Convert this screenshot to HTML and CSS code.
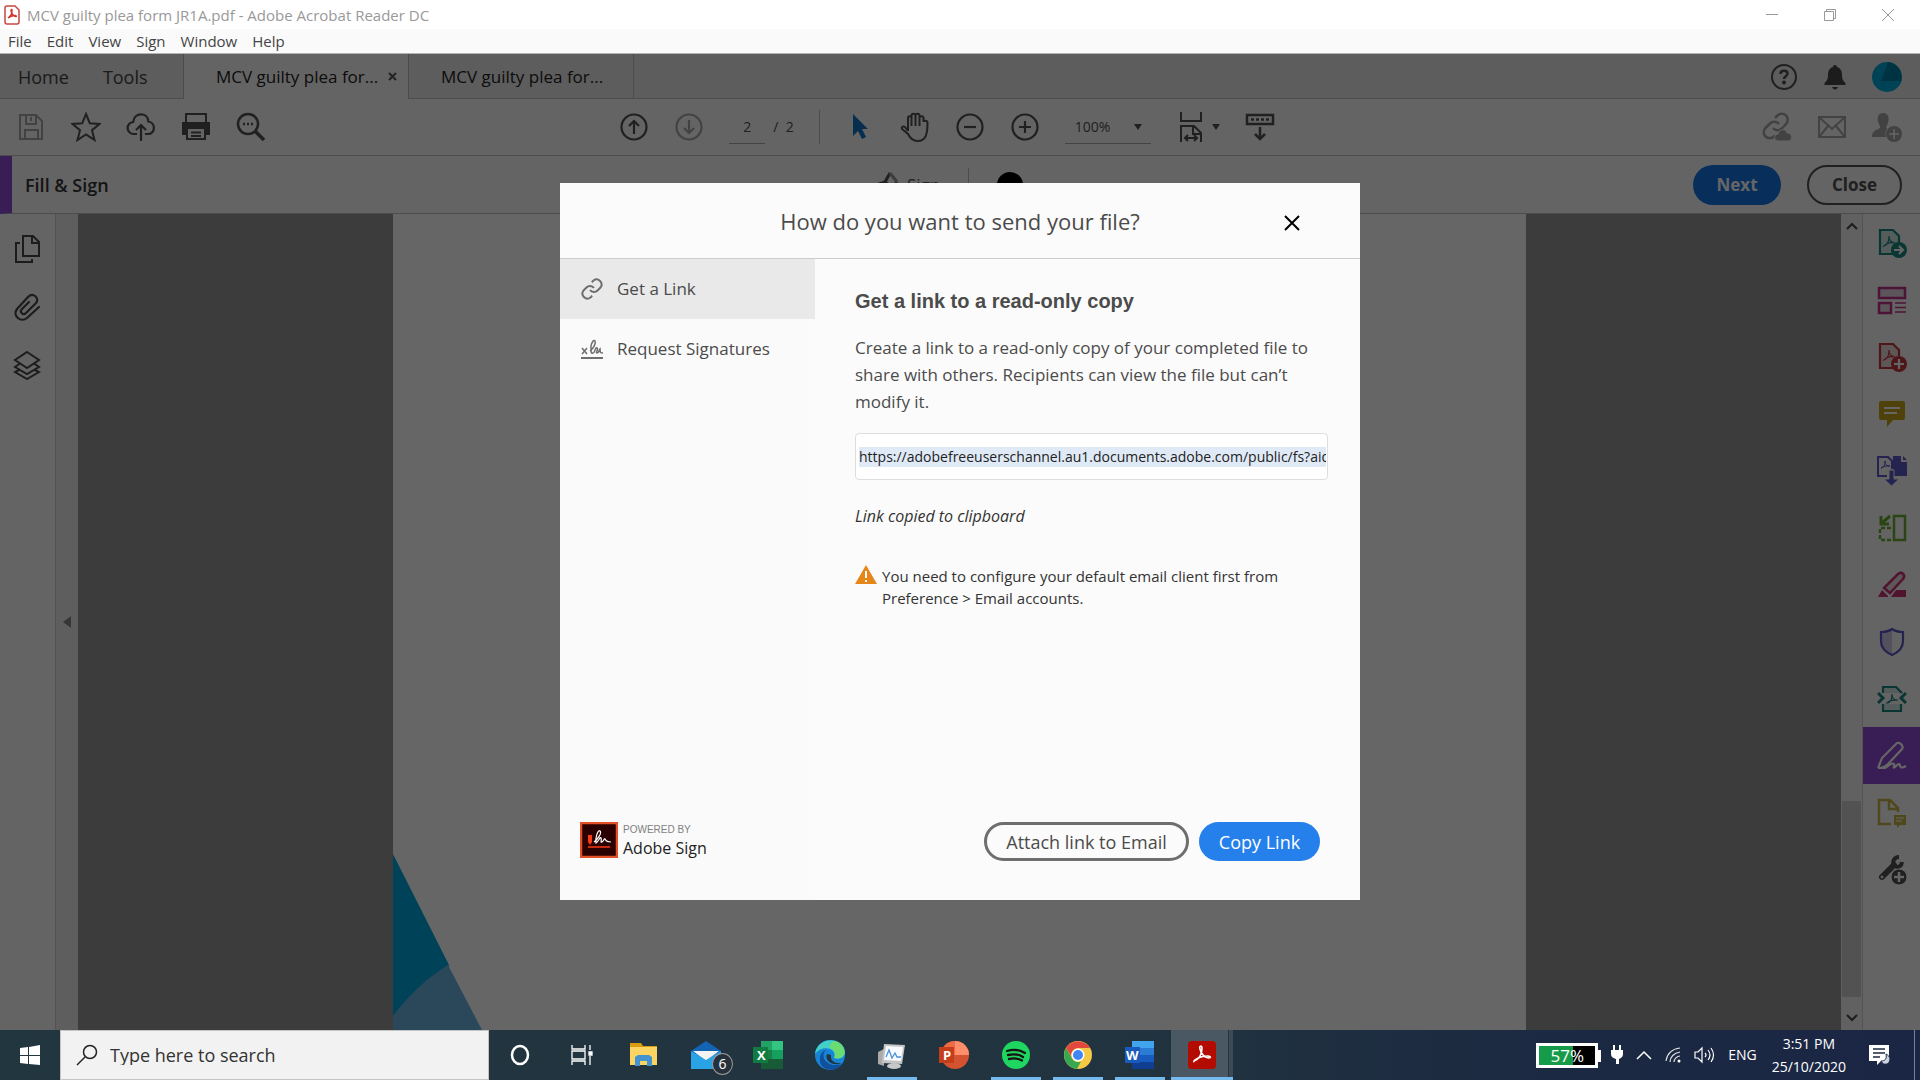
FILE: index.html
```html
<!DOCTYPE html>
<html lang="en">
<head>
    <meta charset="UTF-8">
    <meta name="viewport" content="width=device-width, initial-scale=1.0">
    <title>MCV guilty plea form JR1A.pdf - Adobe Acrobat Reader DC</title>
    <link rel="stylesheet" href="styles.css">
</head>
<body>

    <!-- Title bar -->
    <header class="titlebar">
        <svg class="pdf-icon" width="16" height="20" viewBox="0 0 16 20"><path d="M3 1h8l4 4v12a2 2 0 0 1-2 2H3a2 2 0 0 1-2-2V3a2 2 0 0 1 2-2z" fill="#fff" stroke="#c8463f" stroke-width="1.5"/><path d="M4 13c3-2 4-5 4-7.500 0-2-1.500-1-.8 1 .8 2.500 2.300 4.500 4.300 5 1.300.2 1-1.300-.9-1.100-2.200.1-4.600.9-6.600 2.600z" fill="none" stroke="#d2352c" stroke-width="1.500"/></svg>
        <span class="titlebar-text">MCV guilty plea form JR1A.pdf - Adobe Acrobat Reader DC</span>
        <div class="window-controls">
            <button aria-label="Minimize"><svg width="12" height="12"><path d="M0 5.500h12" stroke="#999"/></svg></button>
            <button aria-label="Restore"><svg width="12" height="12" fill="none" stroke="#999"><path d="M.5 2.500h9v9h-9zM2.500 2.500v-2h9v9h-2"/></svg></button>
            <button aria-label="Close window"><svg width="12" height="12" stroke="#999"><path d="M0 0l12 12M12 0L0 12"/></svg></button>
        </div>
    </header>

    <nav class="menubar">
        <button>File</button>
        <button>Edit</button>
        <button>View</button>
        <button>Sign</button>
        <button>Window</button>
        <button>Help</button>
    </nav>

    <main class="app">
        <!-- Tabs -->
        <div class="tabbar">
            <div class="tab-home">
                <button>Home</button>
                <button>Tools</button>
            </div>
            <div class="tab tab-active">
                <span>MCV guilty plea for...</span>
                <button aria-label="Close tab"><svg width="9" height="9" stroke="#555" stroke-width="2"><path d="M1 1l7 7M8 1L1 8"/></svg></button>
            </div>
            <div class="tab"><span>MCV guilty plea for...</span></div>
            <div class="account">
                <button aria-label="Help"><svg width="28" height="28" fill="none" stroke="#505050" stroke-width="2"><circle cx="14" cy="14" r="12"/><path d="M10.500 11c.2-4.500 7-4 7-.4 0 2.600-3.500 2.600-3.500 5.400" stroke-width="2.500"/><circle cx="14" cy="19.500" r="1" fill="#505050"/></svg></button>
                <button aria-label="Notifications"><svg width="28" height="28" fill="#484848"><path d="M14 2c1.500 0 2 .8 2 2 4 1.200 5 4.500 5 8 0 4 1 6 3.500 8v2h-21v-2C6 18 7 16 7 12c0-3.500 1-6.800 5-8 0-1.200.5-2 2-2zM11 24h6c-.5 1.600-1.500 2.500-3 2.500S11.500 25.600 11 24z"/></svg></button>
                <button aria-label="Account"><svg width="30" height="30"><circle cx="15" cy="15" r="15" fill="#00a9d6"/><path d="M16 0L9 19h20A15 15 0 0 0 16 0z" fill="#007fa3"/></svg></button>
            </div>
        </div>

        <!-- Toolbar -->
        <div class="toolbar">
            <div class="tool-group">
                <button class="disabled" aria-label="Save"><svg width="30" height="30" fill="none" stroke="currentColor" stroke-width="2"><path d="M4 3h16l6 6v18H4zM10 3v9h10V3M15 5v4M9 27v-9h13v9"/></svg></button>
                <button aria-label="Star"><svg width="30" height="30" fill="none" stroke="currentColor" stroke-width="2"><path d="M15 2l3.800 9.300 9.700.6-7.500 6.300 2.500 9.800L15 22.500 6.500 28 9 18.200 1.500 11.900l9.700-.6z"/></svg></button>
                <button aria-label="Upload"><svg width="30" height="30" fill="none" stroke="currentColor" stroke-width="2.200"><path d="M11 22H8a6 6 0 0 1-.8-12C8 0 22 0 22.300 9.500 30 10.500 29.500 22 22 22h-3M15 29V13M10 18l5-5 5 5"/></svg></button>
                <button aria-label="Print"><svg width="30" height="30" fill="none" stroke="currentColor" stroke-width="2"><path d="M5 11V2h20v9" /><path d="M1 10h28v13h-4v-6H5v6H1z" fill="currentColor" stroke="none"/><path d="M6 17v10h18V17M10 20.500h10M10 24h10"/></svg></button>
                <button aria-label="Find"><svg width="30" height="30" fill="none" stroke="currentColor" stroke-width="2.500"><circle cx="12" cy="12" r="10"/><path d="M19 19l9 9" stroke-width="3.500"/><path d="M7 12h2M11 12h2M15 12h2"/></svg></button>
            </div>

            <div class="tool-group tool-center">
                <button aria-label="Previous page"><svg width="30" height="30" fill="none" stroke="currentColor" stroke-width="2.200"><circle cx="15" cy="15" r="12.500"/><path d="M15 22V9M10 14l5-5 5 5"/></svg></button>
                <button class="disabled" aria-label="Next page"><svg width="30" height="30" fill="none" stroke="currentColor" stroke-width="2.200"><circle cx="15" cy="15" r="12.500"/><path d="M15 8v13M10 16l5 5 5-5"/></svg></button>
                <div class="page-nav">
                    <input type="text" value="2" aria-label="Page number">
                    <span>/&nbsp; 2</span>
                </div>
                <i class="divider"></i>
                <button aria-label="Select tool"><svg width="30" height="30"><path d="M8 2v22l5-5 4 8 4-2-4-8h6z" fill="#1473c6"/></svg></button>
                <button aria-label="Hand tool"><svg width="30" height="30" fill="none" stroke="currentColor" stroke-width="2"><path d="M8 19V6c0-2.500 3.500-2.500 3.500 0v8V3.500c0-2.500 4-2.500 4 0V14 3.500c0-2.500 4-2.500 4 0V14 6c0-2.500 4-2.500 4 0v4c0-1.500 4-2 4 1 0 12-2 18-10 18-5 0-7.500-3-9.500-7L2 17c-1-2.500 2-3.500 3.500-1.500L8 19"/></svg></button>
                <button aria-label="Zoom out"><svg width="30" height="30" fill="none" stroke="currentColor" stroke-width="2.200"><circle cx="15" cy="15" r="12.500"/><path d="M9 15h12"/></svg></button>
                <button aria-label="Zoom in"><svg width="30" height="30" fill="none" stroke="currentColor" stroke-width="2.200"><circle cx="15" cy="15" r="12.500"/><path d="M9 15h12M15 9v12"/></svg></button>
                <div class="zoom-select">
                    <select aria-label="Zoom level"><option>100%</option></select>
                    <svg width="8" height="6"><path d="M0 0h8L4 6z" fill="#505050"/></svg>
                </div>
                <button class="fit" aria-label="Fit page">
                    <svg width="30" height="30" fill="none" stroke="currentColor" stroke-width="2"><path d="M5 0v9h20V0M5 30V14h13l7 7v9M17 14v8h8M9 26h12M12 23l-3 3 3 3M18 23l3 3-3 3"/></svg>
                    <svg width="8" height="6"><path d="M0 0h8L4 6z" fill="#505050"/></svg>
                </button>
                <button aria-label="Scrolling"><svg width="30" height="30" fill="none" stroke="currentColor" stroke-width="2.500"><path d="M2 3h26v9H2zM15 15v12M10 22l5 5 5-5"/><path d="M6 7.500h18" stroke-dasharray="3 2"/></svg></button>
            </div>

            <div class="tool-group tool-right disabled">
                <button aria-label="Share link"><svg width="30" height="30" fill="none" stroke="currentColor" stroke-width="2.500"><path d="M11 16a6 6 0 0 0 9 .5l4-4.500a6 6 0 0 0-8.500-8.500l-2.500 2.500M17 12a6 6 0 0 0-9-.5L3.500 16a6 6 0 0 0 8.500 8.500l1-1"/><path d="M16 29a3.500 3.500 0 0 1 0-7c1-5 8-6 9-1 6 0 6 8 1 8z" fill="currentColor" stroke="#fafafa" stroke-width="1"/></svg></button>
                <button aria-label="Email"><svg width="30" height="30" fill="none" stroke="currentColor" stroke-width="2"><path d="M2 5h26v20H2zM2 5l13 12L28 5M2 25l9-11M28 25l-9-11"/></svg></button>
                <button aria-label="Add people"><svg width="30" height="30" fill="currentColor"><path d="M11 1c8 0 6 10 3 14l1 2c-2 3-2 5-1 8H0c0-6 4-7 8-9V14C5 10 4 1 11 1z"/><circle cx="22" cy="22" r="8"/><path d="M17 22h10M22 17v10" stroke="#fafafa" stroke-width="1.500"/></svg></button>
            </div>
        </div>

        <!-- Fill & Sign bar -->
        <div class="fillbar">
            <h1>Fill &amp; Sign</h1>
            <div class="fill-tools">
                <button class="sign-btn"><svg width="24" height="28" fill="none" stroke="#505050" stroke-width="3"><path d="M1 25l4-12 6-2M11 11l5-9M11 11l7 6M18 17l5-6"/><path d="M16 2l7 9" stroke="#999"/></svg>Sign</button>
                <i class="divider"></i>
                <button class="color-dot" aria-label="Color"></button>
            </div>
            <div class="fill-actions">
                <button class="btn-next">Next</button>
                <button class="btn-close">Close</button>
            </div>
        </div>

        <div class="workspace">
            <aside class="left-rail">
                <button aria-label="Page thumbnails"><svg width="28" height="30" fill="none" stroke="#484848" stroke-width="2"><path d="M10 2h10l6 6v14H10zM19 2v7h7"/><path d="M7 9H3v19h16v-3"/></svg></button>
                <button aria-label="Attachments"><svg width="28" height="30" fill="none" stroke="#484848" stroke-width="2.200" stroke-linecap="round"><path d="M26 15L14 26C8 31-1 24 4 17L15 5c5-5 12 1 8 6L13 21c-3 3-7-1-4-4l7-7"/></svg></button>
                <button aria-label="Layers"><svg width="28" height="30" fill="none" stroke="#484848" stroke-width="2"><path d="M14 2l12 8-12 8L2 10zM7 13.500L2 17l12 7 12-7-5-3.500M7 19.500L2 22l12 7 12-7-5-2.500"/></svg></button>
            </aside>
            <div class="rail-strip"><button aria-label="Collapse panel"><svg width="8" height="12"><path d="M8 0v12L0 6z" fill="#888"/></svg></button></div>
            <div class="canvas">
                <div class="sheet">
                    <svg width="90" height="177"><path d="M0 1l56 111-30 60H0z" fill="#00a8de"/><path d="M0 163q24-32 55-51l34 65H0z" fill="#6cb4e4"/></svg>
                </div>
            </div>
            <div class="scrollbar">
                <svg width="12" height="8" fill="none" stroke="#484848" stroke-width="2"><path d="M1 7l5-5 5 5"/></svg>
                <div class="scroll-thumb"></div>
                <svg width="12" height="8" fill="none" stroke="#484848" stroke-width="2"><path d="M1 1l5 5 5-5"/></svg>
            </div>
            <aside class="right-rail">
                <button aria-label="Export PDF"><svg width="30" height="30" fill="none" stroke="#18847e" stroke-width="2.200"><path d="M16 26H3V2h13l6 6v6" fill="#d5e6e5"/><path d="M7 18c4-1 5-5 5-10 0 5 2 6 6 7-5-1-8 0-11 3z" stroke-width="1.200"/><circle cx="22" cy="22" r="8" fill="#18847e" stroke="none"/><path d="M17 22h9M22 18l4 4-4 4" stroke="#fff"/></svg></button>
                <button aria-label="Organize pages"><svg width="30" height="30" fill="#e6d5df" stroke="#c0328a" stroke-width="2.500"><path d="M2 3h26v10H2zM2 18h12v10H2z"/><path d="M18 18h11M18 22.500h11M18 27h11" stroke-width="1.500"/></svg></button>
                <button aria-label="Create PDF"><svg width="30" height="30" fill="none" stroke="#c63842" stroke-width="2.200"><path d="M16 26H3V2h13l6 6v6" fill="#ecd9da"/><path d="M7 18c4-1 5-5 5-10 0 5 2 6 6 7-5-1-8 0-11 3z" stroke-width="1.200"/><circle cx="22" cy="22" r="8" fill="#c63842" stroke="none"/><path d="M17 22h10M22 17v10" stroke="#fff"/></svg></button>
                <button aria-label="Comment"><svg width="30" height="30"><path d="M4 2h22a2 2 0 0 1 2 2v15a2 2 0 0 1-2 2H16l-6 7v-7H4a2 2 0 0 1-2-2V4a2 2 0 0 1 2-2z" fill="#c3a51a"/><path d="M7 9h16M7 14h13" stroke="#fff" stroke-width="2"/></svg></button>
                <button aria-label="Combine files"><svg width="30" height="30" fill="none" stroke="#5c57c8" stroke-width="2"><path d="M10 20H1V1h10l4 4v8"/><path d="M4 12c3 0 4-4 4-7 0 4 2 5 5 5-4 0-6 0-9 2z" stroke-width="1"/><path d="M16 0h8v6h6v14H16z" fill="#5c57c8" stroke="none"/><path d="M26 0l4 4h-4z" fill="#5c57c8" stroke="none"/><path d="M12 14h5v9h5l-7.500 7L7 23h5z" fill="#5c57c8" stroke="#fafafa" stroke-width="1"/></svg></button>
                <button aria-label="Compare files"><svg width="30" height="30" fill="none" stroke="#6dab32" stroke-width="2.500"><path d="M17 3h11v24H17z"/><path d="M14 15H3v12h11" stroke-dasharray="4 2"/><path d="M13 3L5 10M4 3v8h8" stroke-width="3"/></svg></button>
                <button aria-label="Redact"><svg width="30" height="30" fill="none" stroke="#c73475" stroke-width="2.500"><path d="M7 18L21 4c4-3 8 1 5 5L13 23z" fill="#ead6df"/><path d="M1 27l4-7 6 6v1zM14 27l5-7h10v7z" fill="#c73475" stroke="none"/></svg></button>
                <button aria-label="Protect"><svg width="30" height="30" fill="none" stroke="#5b55c5" stroke-width="2.200"><path d="M15 2v26C6 24 4 19 4 14V5c4 0 8-1 11-3z" fill="#cdcbe8" stroke="none"/><path d="M15 2c3 2 7 3 11 3v9c0 7-4 11-11 14C8 25 4 21 4 14V5c4 0 8-1 11-3z"/></svg></button>
                <button aria-label="Compress PDF"><svg width="30" height="30" fill="none" stroke="#18847e" stroke-width="2.200"><path d="M6 9V3h13l6 6M6 20v7h18v-7" fill="#d5e6e5"/><path d="M10 19c3 0 5-3 5-9 0 5 2 6 6 6-5 0-8 0-11 3z" stroke-width="1.200"/><path d="M1 9l5 5-5 5M29 9l-5 5 5 5" stroke-width="3"/></svg></button>
                <button class="active" aria-label="Fill and sign"><svg width="30" height="30" fill="none" stroke="#fff" stroke-width="2.200"><path d="M1 27l4-10L20 2c3-1 7 3 5 6L11 23c-4 4-10 4-10 4h7c5-3 7-6 9-4 1 2-2 5 1 3 2-2 4-4 5-2 0 2 1 4 6 1"/></svg></button>
                <button aria-label="Send for comments"><svg width="30" height="30" fill="none" stroke="#c4b347" stroke-width="2.500"><path d="M14 26H2V2h11l8 8v4M12 2v9h9"/><path d="M17 17h12v10h-6l-3 3v-3h-3z" fill="#c4b347" stroke="none"/><path d="M19 20h8M19 23h6" stroke="#fff" stroke-width="1"/></svg></button>
                <button aria-label="More tools"><svg width="30" height="30" fill="none" stroke="#505050"><path d="M17 10L5 22" stroke-width="6" stroke-linecap="round"/><path d="M22 2c-5 0-7 5-5 8s7 3 8-3" stroke-width="4"/><circle cx="5" cy="22" r="1" fill="#fff" stroke="#fff"/><circle cx="22" cy="22" r="8" fill="#505050" stroke="#fafafa"/><path d="M17 22h10M22 17v10" stroke="#fff" stroke-width="2.500"/></svg></button>
            </aside>
        </div>

        <!-- Send dialog -->
        <div class="overlay">
            <section class="modal" role="dialog" aria-labelledby="modalTitle">
                <header class="modal-header">
                    <h2 id="modalTitle">How do you want to send your file?</h2>
                    <button class="modal-x" aria-label="Close dialog"><svg width="16" height="16" stroke="#000" stroke-width="2"><path d="M1 1l14 14M15 1L1 15"/></svg></button>
                </header>
                <div class="modal-body">
                    <div class="modal-side">
                        <button class="side-item side-active"><svg width="22" height="22" viewBox="1 1 22 22" fill="none" stroke="#6e6e6e" stroke-width="2"><path d="M10 13a5 5 0 0 0 7.500.5l3-3a5 5 0 0 0-7-7l-1.700 1.700M14 11a5 5 0 0 0-7.500-.5l-3 3a5 5 0 0 0 7 7l1.700-1.700"/></svg>Get a Link</button>
                        <button class="side-item"><svg width="22" height="22" fill="none" stroke="#6e6e6e" stroke-width="1.500"><path d="M0 20h22" stroke-width="2"/><path d="M1 10l5 6M6 10l-5 6M9 13c4-3 6-8 5-10s-4 2-4 6c0 5 0 7 2 6 2 0 2-6 4-5s-2 5 0 5 2-3 3-4c0 3 0 4 3 4"/></svg>Request Signatures</button>
                        <div class="powered">
                            <svg width="38" height="36"><path d="M1 1h36v34H1z" fill="#2a0000" stroke="#e34f26" stroke-width="2.500"/><path d="M8 13h4v7l-2 3-2-3z" fill="#fa3a10"/><path d="M14 20c4-3 8-9 6-11s-5 7-4 12c3-2 4-7 5-5s-1 5 1 4 2-4 3-3 0 3 6 3" fill="none" stroke="#fff" stroke-width="1.200"/><path d="M8 25h22" stroke="#fa3a10" stroke-width="1.500"/></svg>
                            <div>
                                <p class="powered-by">POWERED BY</p>
                                <p class="powered-name">Adobe Sign</p>
                            </div>
                        </div>
                    </div>
                    <div class="modal-content">
                        <h3>Get a link to a read-only copy</h3>
                        <p class="desc">Create a link to a read-only copy of your completed file to share with others. Recipients can view the file but can’t modify it.</p>
                        <div class="link-box">
                            <input type="text" aria-label="Link" readonly value="https://adobefreeuserschannel.au1.documents.adobe.com/public/fs?aid=">
                        </div>
                        <p class="copied">Link copied to clipboard</p>
                        <div class="warning">
                            <svg width="22" height="19"><path d="M11 0l11 19H0z" fill="#e68619"/><path d="M11 6v7M11 15v2" stroke="#fff" stroke-width="2"/></svg>
                            <p>You need to configure your default email client first from Preference &gt; Email accounts.</p>
                        </div>
                        <div class="modal-actions">
                            <button class="btn-attach">Attach link to Email</button>
                            <button class="btn-copy">Copy Link</button>
                        </div>
                    </div>
                </div>
            </section>
        </div>
    </main>

    <!-- Taskbar -->
    <footer class="taskbar">
        <button class="start" aria-label="Start"><svg width="20" height="20" fill="#fff"><path d="M0 3l8-1v8H0zM9 2l11-2v10H9zM0 11h8v8l-8-1zM9 11h11v9L9 19z"/></svg></button>
        <label class="search">
            <svg width="22" height="22" fill="none" stroke="#222" stroke-width="1.500"><circle cx="14" cy="8" r="6.500"/><path d="M9 13l-8 8"/></svg>
            <input type="text" placeholder="Type here to search">
        </label>
        <div class="task-items">
            <button aria-label="Cortana"><svg width="20" height="22"><ellipse cx="10" cy="11" rx="8" ry="9" fill="none" stroke="#fff" stroke-width="2.500"/></svg></button>
            <button aria-label="Task view"><svg width="22" height="20" fill="none" stroke="#fff" stroke-width="1.300"><path d="M1 0v4h13V0M1 6h13v8H1zM1 20v-4h13v4M19 0v5M19 11v9"/><path d="M18 7h3v3h-3z" fill="#fff"/></svg></button>
            <button aria-label="File Explorer"><svg width="28" height="26"><path d="M0 1h11l2 3h14v19H0z" fill="#d99b12"/><path d="M0 5h27v18H0z" fill="#fcd462"/><path d="M5 24V15l3-2h11l3 2v9h-5v-5h-7v5z" fill="#4293cf"/></svg></button>
            <button class="mail" aria-label="Mail"><svg width="30" height="28"><path d="M0 10L15 0l15 10v18H0z" fill="#1464b4"/><path d="M2 10h26L15 20z" fill="#f4f4f4"/><path d="M0 10l15 9 15-9v18H0z" fill="#2aa2e6"/></svg><span>6</span></button>
            <button aria-label="Excel"><svg width="30" height="28"><path d="M8 0h22v28H8z" fill="#1a7f45"/><path d="M8 0h11v9H8z" fill="#21a366"/><path d="M19 0h11v9H19z" fill="#33c481"/><path d="M19 9h11v9H19z" fill="#16a05d"/><path d="M8 18h22v10H8z" fill="#185c37"/><path d="M0 6h15v16H0z" fill="#107c41"/><text x="4" y="19">X</text></svg></button>
            <button aria-label="Edge"><svg width="30" height="30"><circle cx="15" cy="15" r="15" fill="#1784d5"/><path d="M0 14C2-4 29-4 30 12c0 6-6 8-11 6 4-8-10-15-19-4z" fill="#43cfc8"/><path d="M18 1c14 1 16 20 1 17 3-7-2-9-5-11z" fill="#6bdc72"/><path d="M11 10c-7 6 1 19 16 14-7 10-24 6-22-6 0-4 3-7 6-8z" fill="#124f9c"/><path d="M12 14c-3 7 7 13 15 9-7 1-12-2-11-8z" fill="#22353f"/></svg></button>
            <button class="open" aria-label="System monitor"><svg width="28" height="28"><path d="M0 11l6-3v17l-6-2z" fill="#aaa"/><path d="M6 3l21 1-3 19-20-1z" fill="#c4c4c4"/><path d="M8 5l17 1-2 14-17-1z" fill="#f7fbff"/><path d="M8 16l3-7 3 8 3-5 2 4h4" fill="none" stroke="#4a91d9" stroke-width="1.300"/><ellipse cx="16" cy="25" rx="7" ry="3" fill="#c8c8c8"/></svg></button>
            <button aria-label="PowerPoint"><svg width="30" height="28"><circle cx="16" cy="14" r="14" fill="#d35230"/><path d="M16 0a14 14 0 0 1 14 14H16z" fill="#ff8f6b"/><path d="M2 14A14 14 0 0 1 16 0v14z" fill="#ed6c47"/><path d="M0 6h15v16H0z" fill="#c43e1c"/><text x="4" y="19">P</text></svg></button>
            <button class="open" aria-label="Spotify"><svg width="28" height="28"><circle cx="14" cy="14" r="14" fill="#1ed760"/><path d="M5 10c6-2 13-1 18 2M6 14c5-1 11-1 15 2M7 18c5-1 9-1 13 1.500" fill="none" stroke="#191414" stroke-width="2.300" stroke-linecap="round"/></svg></button>
            <button class="open" aria-label="Chrome"><svg width="28" height="28"><circle cx="14" cy="14" r="14" fill="#f6c945"/><path d="M2 7a14 14 0 0 1 24 0H14a7 7 0 0 0-6.500 9z" fill="#e2483d"/><path d="M2 7l6 10.500a7 7 0 0 0 9 3L13 28A14 14 0 0 1 2 7z" fill="#36a852"/><circle cx="14" cy="14" r="6.500" fill="#fff"/><circle cx="14" cy="14" r="5" fill="#4285f4"/></svg></button>
            <button class="open" aria-label="Word"><svg width="30" height="28"><path d="M7 0h22v28H7z" fill="#185abd"/><path d="M7 0h22v7H7z" fill="#41a5ee"/><path d="M7 7h22v7H7z" fill="#2b7cd3"/><path d="M7 21h22v7H7z" fill="#103f91"/><path d="M0 6h15v16H0z" fill="#185abd"/><text x="1" y="19">W</text></svg></button>
            <button class="open current" aria-label="Acrobat Reader"><svg width="28" height="28"><rect width="28" height="28" rx="4" fill="#b30b00"/><path d="M6 20c5-2 8-7 8-13 0-3-3-2-2 1 1 5 5 9 9 9 2 0 2-2-1-2-5 0-9 1-13 4-2 2-1 2-1 1z" fill="none" stroke="#fff" stroke-width="1.600"/></svg></button>
        </div>
        <div class="tray">
            <div class="battery">57%</div>
            <svg width="12" height="20" fill="#fff"><path d="M2 0h2v5h4V0h2v5h2v4c0 3-2 4-4 5v5H5v-5c-3-1-5-2-5-5V5h2z"/></svg>
            <button aria-label="Show hidden icons"><svg width="16" height="10" fill="none" stroke="#fff" stroke-width="1.500"><path d="M1 9l7-7 7 7"/></svg></button>
            <svg width="16" height="16" fill="none" stroke="#ddd" stroke-width="1.200"><path d="M1 14C2 7 7 2 15 1M5 15c0-5 4-9 10-10M9 15c0-3 3-6 6-6"/><circle cx="14" cy="14" r="1.500" fill="#fff" stroke="none"/></svg>
            <svg width="21" height="18" fill="none" stroke="#fff" stroke-width="1.200"><path d="M1 6h3l4-4v14l-4-4H1zM11 7q2 2 0 4M14 4q4 5 0 10M17 2q5 7 0 14"/></svg>
            <span>ENG</span>
            <div class="clock"><span>3:51 PM</span><span>25/10/2020</span></div>
            <button aria-label="Notification center"><svg width="22" height="22"><path d="M0 1h20v16h-8l-4 4v-4H0z" fill="#fff"/><path d="M4 5h12M4 9h12M4 13h7" stroke="#1b2842" stroke-width="1.500"/><path d="M17 10c1 5-1 7-5 7 2 5 9 4 9-2 0-2-2-4-4-5z" fill="#ccd3e0" stroke="#1b2842"/></svg></button>
        </div>
    </footer>

</body>
</html>
```
FILE: styles.css
```css
* { margin: 0; padding: 0; box-sizing: border-box; }
body { height: 100vh; display: flex; flex-direction: column; overflow: hidden; background: #fff; font-family: "Open Sans", "Noto Sans", sans-serif; font-size: 14px; line-height: 20px; color: #222; }
button, input, select { font: inherit; color: inherit; background: none; border: none; outline: none; }
button { display: flex; align-items: center; justify-content: center; cursor: pointer; white-space: nowrap; }
svg { display: block; flex: none; }

/* Title bar */
.titlebar {
    display: flex;
    align-items: center;
    height: 29px;
    padding-left: 4px;
    font-size: 15px;
    color: #999;
}

.titlebar-text { margin-left: 7px; flex: 1; }
.window-controls { display: flex; margin-right: 3px; }
.window-controls button { width: 58px; height: 28px; }

.menubar {
    display: flex;
    gap: 15px;
    height: 24px;
    padding-left: 8px;
    background: #fafafa;
    font-size: 15px;
    color: #444;
}

.app {
    flex: 1;
    min-height: 0;
    display: flex;
    flex-direction: column;
    position: relative;
    background: #fafafa;
    border-top: 1px solid #b4b4b4;
}

/* Tabs */
.tabbar {
    display: flex;
    height: 45px;
    background: #e8e8e8;
    font-size: 17px;
    box-shadow: inset 0 -1px #bebebe;
}

.tab-home {
    display: flex;
    gap: 34px;
    width: 184px;
    padding-left: 18px;
    font-size: 18px;
    color: #444;
    border-right: 1px solid #bebebe;
}

.tab {
    display: flex;
    align-items: center;
    gap: 10px;
    width: 225px;
    padding-left: 32px;
    white-space: nowrap;
    border-right: 1px solid #bebebe;
}

.tab-active { background: #fafafa; }

.account {
    display: flex;
    align-items: center;
    gap: 23px;
    margin-left: auto;
    padding-right: 18px;
}

/* Toolbar */
.toolbar {
    display: grid;
    grid-template-columns: 1fr auto 1fr;
    align-items: center;
    height: 57px;
    padding: 0 18px 0 16px;
    color: #505050;
    border-bottom: 1px solid #bebebe;
}

.tool-group { display: flex; align-items: center; gap: 25px; }
.tool-center { margin-right: 24px; }
.tool-right { justify-content: flex-end; }
.disabled { color: #a5a5a5; }
.page-nav { display: flex; align-items: center; gap: 8px; }
.page-nav input { width: 36px; height: 34px; text-align: center; border-bottom: 1px solid #aaa; }
.divider { width: 1px; height: 34px; background: #bebebe; }
.zoom-select { display: flex; align-items: center; width: 86px; height: 34px; border-bottom: 1px solid #aaa; }
.zoom-select select { width: 69px; padding-left: 10px; appearance: none; }
.fit { gap: 6px; }

/* Fill & Sign */
.fillbar {
    display: flex;
    align-items: center;
    height: 58px;
    padding: 0 18px 0 13px;
    border-left: 12px solid #8f4bd8;
    border-bottom: 1px solid #bebebe;
}

.fillbar h1 { width: 849px; font-size: 18px; font-weight: 600; color: #333; }
.fill-tools { display: flex; align-items: center; gap: 28px; }
.sign-btn { gap: 9px; font-size: 17px; color: #505050; }
.color-dot { width: 26px; height: 26px; border-radius: 50%; background: #000; }
.fill-actions { display: flex; gap: 26px; margin-left: auto; font-size: 17px; font-weight: 700; }
.fill-actions button { height: 40px; border-radius: 20px; }
.btn-next { width: 88px; background: #1473e6; color: #fff; }
.btn-close { width: 95px; color: #505050; border: 2px solid #505050; }

/* Workspace */
.workspace { flex: 1; min-height: 0; display: flex; }

.left-rail {
    width: 56px;
    display: flex;
    flex-direction: column;
    align-items: center;
    gap: 28px;
    padding: 20px 2px 0 0;
    border-right: 1px solid #cfcfcf;
}

.rail-strip { display: flex; align-items: center; justify-content: center; width: 22px; background: #ececec; }
.canvas { flex: 1; display: flex; justify-content: center; background: #979797; }
.sheet { width: 65%; max-width: 1133px; display: flex; align-items: flex-end; background: #fff; }

.scrollbar {
    width: 22px;
    display: flex;
    flex-direction: column;
    align-items: center;
    padding: 8px 0;
    background: #f2f2f2;
    border-right: 1px solid #cfcfcf;
}

.scroll-thumb { width: 19px; height: 196px; margin: auto 0 17px; background: #cdcdcd; }

.right-rail { width: 57px; }
.right-rail button { width: 57px; height: 57px; }
.right-rail .active { background: #8f4bd8; }

/* Send dialog */
.overlay {
    position: absolute;
    inset: 0;
    display: flex;
    align-items: center;
    justify-content: center;
    padding-bottom: 1px;
    background: rgba(0, 0, 0, 0.6);
}

.modal {
    width: 800px;
    max-width: 100%;
    display: flex;
    flex-direction: column;
    background: #fbfbfb;
    color: #4b4b4b;
    font-size: 17px;
}

.modal-header {
    position: relative;
    display: flex;
    align-items: center;
    justify-content: center;
    height: 76px;
    border-bottom: 1px solid #ccc;
}

.modal-header h2 { font-size: 22px; font-weight: 400; line-height: 28px; }
.modal-x { position: absolute; right: 60px; top: 32px; }
.modal-body { display: flex; min-height: 641px; }

.modal-side {
    width: 255px;
    display: flex;
    flex-direction: column;
    padding-bottom: 42px;
    background: #fafafa;
}

.side-item { justify-content: flex-start; gap: 14px; height: 60px; padding-left: 21px; }
.side-active { background: #e9e9e9; }

.powered { display: flex; align-items: center; gap: 5px; margin-top: auto; padding-left: 20px; }
.powered-by { font: 10px/16px "Liberation Sans", Arial, sans-serif; color: #808080; }
.powered-name { font-size: 16px; color: #222; }

.modal-content {
    flex: 1;
    display: flex;
    flex-direction: column;
    padding: 30px 32px 39px 40px;
}

.modal-content h3 { font: bold 20px/24px "Liberation Sans", Arial, sans-serif; }
.desc { margin-top: 21px; line-height: 27px; }

.link-box {
    display: flex;
    align-items: center;
    height: 47px;
    margin-top: 18px;
    padding: 0 1px 0 3px;
    background: #fff;
    border: 1px solid #ddd;
    border-radius: 4px;
}

.link-box input { width: 100%; height: 20px; background: #e0eaf7; font-size: 14px; color: #222; }
.copied { margin-top: 26px; font-size: 16px; font-style: italic; color: #333; }
.warning { display: flex; gap: 5px; margin-top: 39px; font-size: 15px; line-height: 22px; color: #333; }
.modal-actions { display: flex; justify-content: flex-end; gap: 10px; margin-top: auto; font-size: 18px; }
.modal-actions button { height: 39px; border-radius: 20px; }
.btn-attach { width: 205px; border: 3px solid #6e6e6e; }
.btn-copy { width: 121px; margin-right: 8px; background: #2680eb; color: #fff; }

/* Taskbar */
.taskbar {
    display: flex;
    height: 50px;
    background: linear-gradient(90deg, #22363f 0%, #21333f 60%, #1c2942 80%, #1a2644 100%);
    color: #fff;
}

.start { width: 60px; }

.search {
    display: flex;
    align-items: center;
    gap: 12px;
    width: 429px;
    padding-left: 15px;
    background: #f2f2f2;
    border: 1px solid #c4c4c4;
}

.search input { flex: 1; font-size: 18px; }
.search input::placeholder { color: #333; opacity: 1; }

.task-items { display: flex; }
.task-items button { position: relative; width: 62px; }
.task-items text { font-size: 13px; font-weight: 700; fill: #fff; }

.open::after {
    content: '';
    position: absolute;
    left: 6px;
    right: 6px;
    bottom: 0;
    height: 3px;
    background: #76b9ed;
}

.task-items .current { background: linear-gradient(90deg, #4a5863 57px, #26343f 57px, #26343f 58px, #3c4a57 58px); }
.current::after { left: 0; right: 0; }

.mail span {
    position: absolute;
    right: 4px;
    bottom: 5px;
    width: 21px;
    border: 1px solid #999;
    border-radius: 50%;
    background: #26313c;
}

.tray {
    display: flex;
    align-items: center;
    gap: 13px;
    margin: 0 5px 0 auto;
    padding-right: 23px;
    border-right: 1px solid #7a8394;
}

.tray > * { flex: none; }

.battery {
    position: relative;
    width: 62px;
    height: 25px;
    border: 3px solid #fff;
    background: linear-gradient(90deg, #169c48 61%, #000 61%);
    font-size: 17px;
    text-align: center;
}

.battery::after {
    content: '';
    position: absolute;
    right: -6px;
    top: 4px;
    width: 3px;
    height: 12px;
    background: #fff;
}

.clock { display: flex; flex-direction: column; align-items: center; margin-left: 2px; line-height: 23px; }
.clock + button { margin-left: 10px; }
```
